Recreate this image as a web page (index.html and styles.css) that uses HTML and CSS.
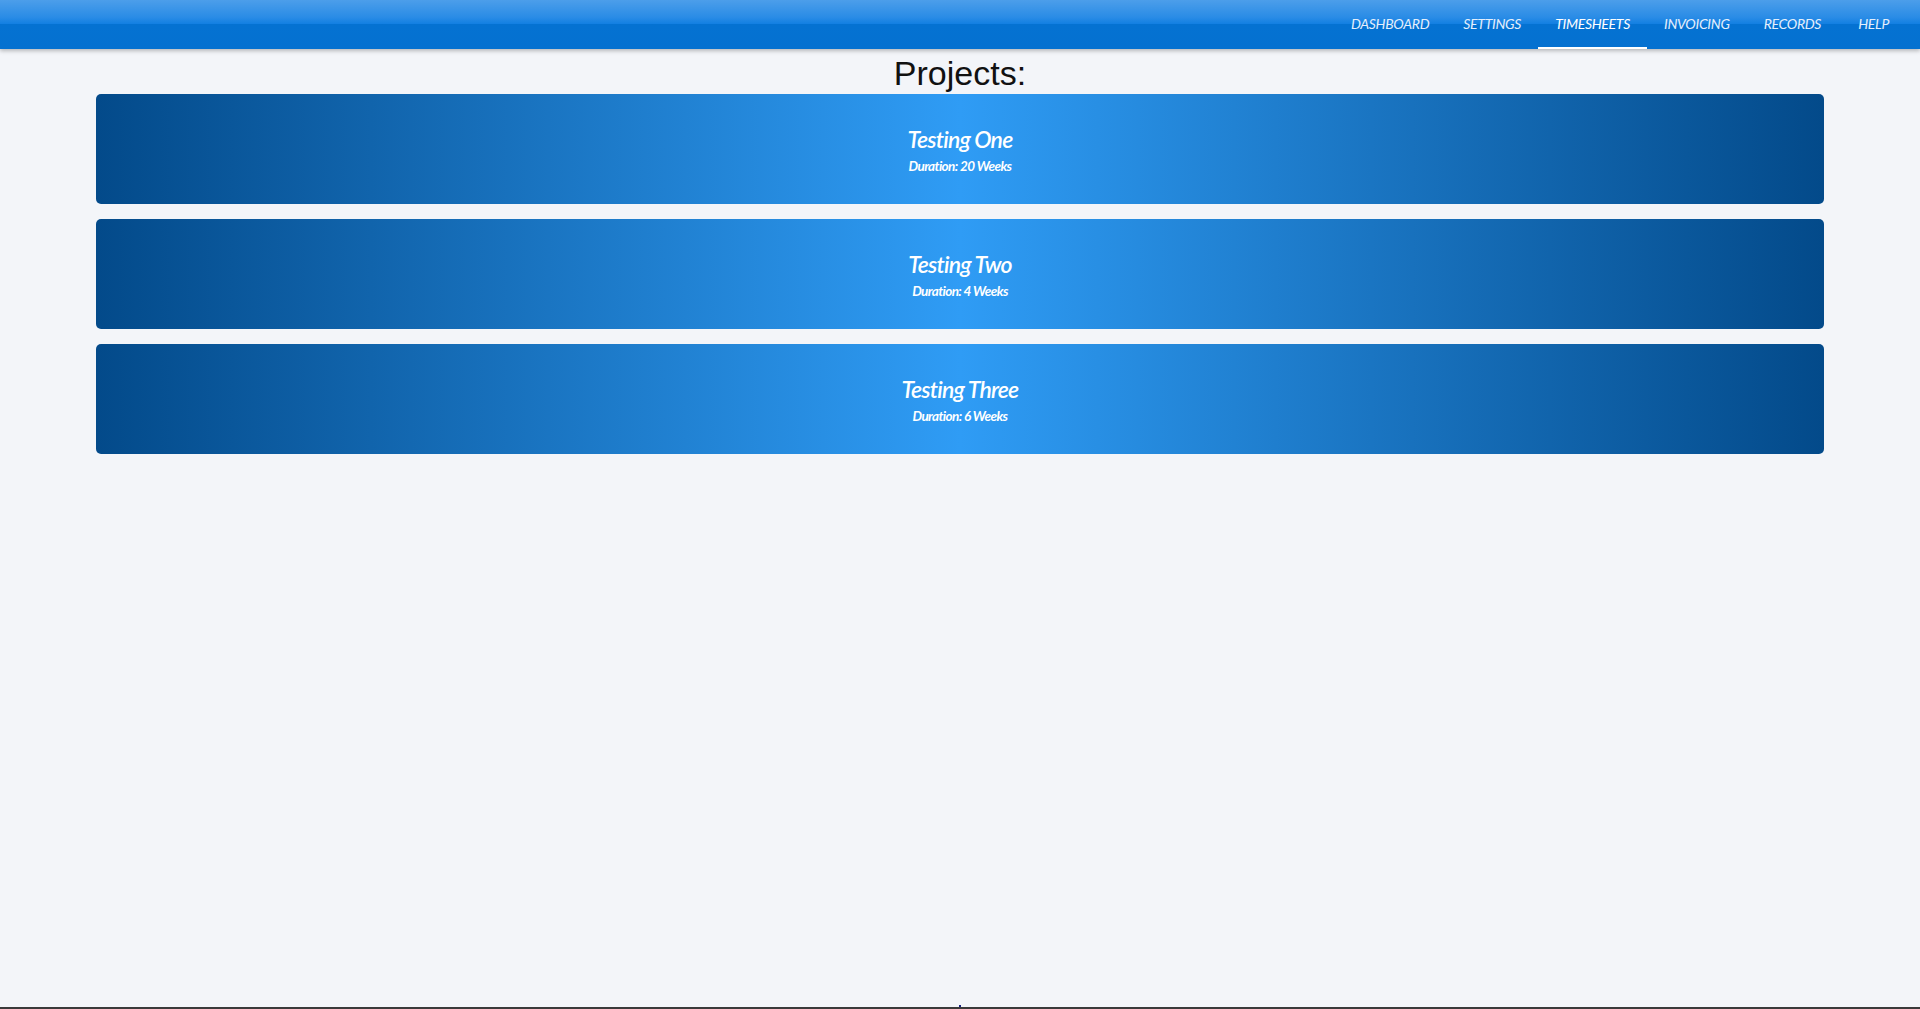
FILE: index.html
```html
<!DOCTYPE html>
<html>
<head>
<meta charset="utf-8">
<link rel="stylesheet" href="styles.css">
</head>
<body>
<header class="navbar">
  <nav class="nav">
    <a class="nav-item">DASHBOARD</a>
    <a class="nav-item">SETTINGS</a>
    <a class="nav-item active">TIMESHEETS</a>
    <a class="nav-item">INVOICING</a>
    <a class="nav-item">RECORDS</a>
    <a class="nav-item help">HELP</a>
  </nav>
</header>
<main class="content">
  <h1 class="title">Projects:</h1>
  <div class="card">
    <div class="card-name">Testing One</div>
    <div class="card-dur">Duration: 20 Weeks</div>
  </div>
  <div class="card">
    <div class="card-name">Testing Two</div>
    <div class="card-dur">Duration: 4 Weeks</div>
  </div>
  <div class="card">
    <div class="card-name">Testing Three</div>
    <div class="card-dur">Duration: 6 Weeks</div>
  </div>
</main>
<div class="bottom-line"><span class="dot"></span></div>
</body>
</html>
```

FILE: styles.css
```css
html, body {
  margin: 0;
  padding: 0;
  height: 100%;
}
body {
  background: #f3f5f9;
  font-family: "Liberation Sans", Arial, sans-serif;
  display: flex;
  flex-direction: column;
  overflow: hidden;
}
.navbar {
  height: 49px;
  background: linear-gradient(to bottom, #4c9eea 0%, #2a8ce6 35%, #1480e2 48%, #0572d2 49%, #0571d0 100%);
  box-shadow: 0 2px 4px rgba(0,0,0,0.25);
  display: flex;
  justify-content: flex-end;
  flex-shrink: 0;
}
.nav {
  display: flex;
  margin-right: 14px;
}
.nav-item {
  font-family: Lato, sans-serif;
  font-style: italic;
  font-size: 14px;
  color: #e4effc;
  padding: 0 17px;
  line-height: 47px;
  height: 47px;
  border-bottom: 2px solid transparent;
  letter-spacing: -0.3px;
}
.nav-item.active {
  border-bottom-color: #ffffff;
  color: #ffffff;
}
.nav-item.help {
  padding-left: 20px;
}
.content {
  flex: 1;
  display: flex;
  flex-direction: column;
  align-items: center;
}
.title {
  margin: 3px 0 0 0;
  font-weight: normal;
  font-size: 34px;
  line-height: 42px;
  color: #111;
}
.card {
  width: 1728px;
  height: 110px;
  box-sizing: border-box;
  border-radius: 5px;
  background: linear-gradient(to right, #034a8a 0%, #2f9cf5 50%, #034a8a 100%);
  display: flex;
  flex-direction: column;
  align-items: center;
  justify-content: center;
  color: #fff;
  font-family: Lato, sans-serif;
  font-style: italic;
  margin-bottom: 15px;
  padding-top: 3px;
}
.card-name {
  font-size: 23px;
  font-weight: 600;
  letter-spacing: -0.8px;
  line-height: 30px;
}
.card-dur {
  font-size: 13.5px;
  font-weight: 700;
  letter-spacing: -0.6px;
  line-height: 24px;
}
.bottom-line {
  height: 2px;
  background: #3a3a3a;
  position: relative;
  flex-shrink: 0;
}
.dot {
  position: absolute;
  left: 959px;
  top: -2px;
  width: 2px;
  height: 2px;
  background: #1a237e;
}
```
